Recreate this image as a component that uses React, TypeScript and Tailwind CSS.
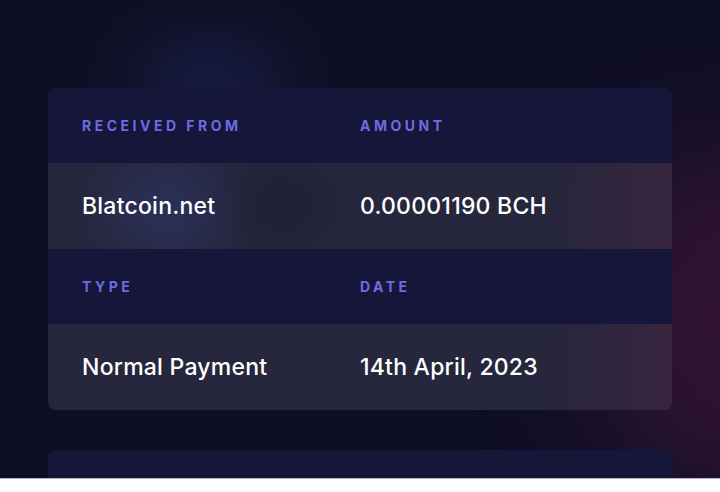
import React from "react";

const rows = [
    [
        { label: "Received From", value: "Blatcoin.net" },
        { label: "Amount", value: "0.00001190 BCH" },
    ],
    [
        { label: "Type", value: "Normal Payment" },
        { label: "Date", value: "14th April, 2023" },
    ],
];

export default function App() {
    return (
        <div className="flex h-[492px] w-[720px] flex-col bg-white font-['Inter',sans-serif]">
            <div className="relative h-[479px] overflow-hidden border-b border-[#b4b4c8] bg-[#0f0f24]">
                {/* background glows */}
                <div className="pointer-events-none absolute left-[140px] top-[50px] h-[70px] w-[140px] rounded-full bg-[#2a3a8a]/40 blur-[35px]" />
                <div className="pointer-events-none absolute left-[600px] top-[150px] h-[340px] w-[260px] rounded-full bg-[#5a1848]/45 blur-[60px]" />

                <div className="relative flex flex-col gap-10 px-12 pt-[88px]">
                    <div className="overflow-hidden rounded-lg">
                        {rows.map((pair, i) => (
                            <div key={i}>
                                <div className="grid h-[75px] grid-cols-[278px_1fr] items-center bg-[#15163a] pl-[34px]">
                                    {pair.map((c) => (
                                        <div
                                            key={c.label}
                                            className="text-[14px] font-bold uppercase tracking-[0.25em] text-[#6d6be0]"
                                        >
                                            {c.label}
                                        </div>
                                    ))}
                                </div>
                                <div className="relative grid h-[86px] grid-cols-[278px_1fr] items-center overflow-hidden bg-[#29293f]/90 pl-[34px]">
                                    {i === 0 && (
                                        <>
                                            <div className="pointer-events-none absolute left-[60px] top-[5px] h-[80px] w-[120px] rounded-full bg-[#34448a]/40 blur-[28px]" />
                                            <div className="pointer-events-none absolute left-[185px] top-[15px] h-[55px] w-[90px] rounded-full bg-[#1a1a2c]/50 blur-[22px]" />
                                        </>
                                    )}
                                    <div className="pointer-events-none absolute right-[-40px] top-0 h-full w-[160px] bg-gradient-to-r from-transparent to-[#4a2440]/60" />
                                    {pair.map((c) => (
                                        <div
                                            key={c.value}
                                            className="relative text-[23px] font-medium tracking-[0.01em] text-white"
                                        >
                                            {c.value}
                                        </div>
                                    ))}
                                </div>
                            </div>
                        ))}
                    </div>
                    <div className="h-[60px] rounded-lg bg-[#15163a]" />
                </div>
            </div>
        </div>
    );
}
